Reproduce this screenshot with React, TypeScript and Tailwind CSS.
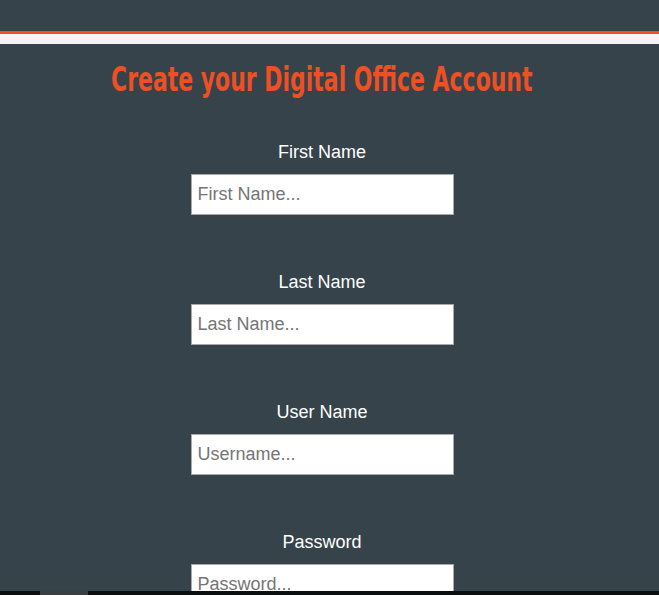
import React from 'react';

const fields = [
  { label: 'First Name', placeholder: 'First Name...' },
  { label: 'Last Name', placeholder: 'Last Name...' },
  { label: 'User Name', placeholder: 'Username...' },
  { label: 'Password', placeholder: 'Password...' },
];

const App = () => {
  return (
    <div className="w-[659px] h-[595px] flex flex-col bg-[#36434b] overflow-hidden">
      <div className="h-[591px] overflow-hidden">
        <div className="h-[31px]" />
        <div className="h-[3px] bg-[#ee4f23]" />
        <div className="h-[10px] bg-[#f4f4f4]" />
        <div className="w-[644px] flex flex-col items-center">
          <h1
            className="mt-[16px] h-[40px] leading-[40px] text-[33px] font-bold text-[#ee4f23] scale-x-[0.74] whitespace-nowrap"
            style={{ fontFamily: '"DejaVu Sans Condensed", "Liberation Sans", sans-serif' }}
          >
            Create your Digital Office Account
          </h1>
          <form className="mt-[42px] flex flex-col items-center">
            {fields.map((f) => (
              <div key={f.label} className="flex flex-col items-center mb-[57px]">
                <label className="h-[20px] leading-[20px] text-[18px] text-white font-['Liberation_Sans',sans-serif] mb-[12px]">
                  {f.label}
                </label>
                <input
                  type={f.label === 'Password' ? 'password' : 'text'}
                  placeholder={f.placeholder}
                  className="w-[263px] h-[41px] bg-white border border-[#a9a9a9] px-[6px] text-[18px] placeholder:text-[#757575] font-['Liberation_Sans',sans-serif] outline-none"
                />
              </div>
            ))}
          </form>
        </div>
      </div>
      <div className="h-[4px] bg-[#0b0f10] flex">
        <div className="ml-[40px] w-[48px] bg-[#3a3f42]" />
      </div>
    </div>
  );
};

export default App;
